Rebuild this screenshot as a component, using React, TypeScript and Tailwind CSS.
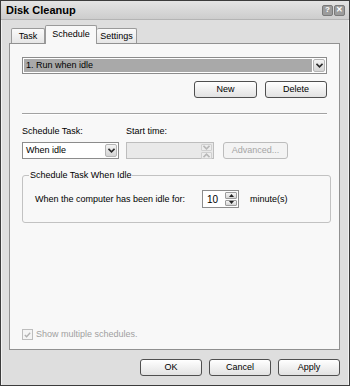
import React from "react";

function Chevron({ color = "#2b2b2b" }: { color?: string }) {
  return (
    <svg width="7" height="5" viewBox="0 0 7 5">
      <path d="M0.5 0.8 L3.5 3.8 L6.5 0.8" fill="none" stroke={color} strokeWidth="1.6" />
    </svg>
  );
}

function Tri({ up, color }: { up?: boolean; color: string }) {
  return (
    <svg width="5" height="3" viewBox="0 0 5 3">
      <path d={up ? "M0 3 L2.5 0 L5 3 Z" : "M0 0 L2.5 3 L5 0 Z"} fill={color} />
    </svg>
  );
}

function Btn({ label, className = "" }: { label: string; className?: string }) {
  return (
    <div
      className={`h-[17px] flex items-center justify-center rounded-[3px] border border-[#4f4f4f] bg-gradient-to-b from-white to-[#e2e2e2] text-black ${className}`}
    >
      {label}
    </div>
  );
}

function ArrowBtn() {
  return (
    <div className="w-[12px] h-full flex items-center justify-center rounded-[2px] border border-[#b5b5b5] bg-gradient-to-b from-[#f4f4f4] to-[#d4d4d4]">
      <Chevron />
    </div>
  );
}

export default function App() {
  return (
    <div className="w-[350px] h-[386px] flex flex-col bg-[#dedede] border border-[#3c3c3c] font-['Liberation_Sans',Arial,sans-serif] text-[9px] leading-[11px] text-black overflow-hidden">
      {/* title bar */}
      <div className="h-[19px] flex items-center justify-between pl-[5px] pr-[4px] bg-gradient-to-b from-[#e4e4e4] to-[#cdcdcd] border-b border-[#b4b4b4]">
        <span className="text-[11px] font-bold leading-[13px]">Disk Cleanup</span>
        <div className="flex gap-[1px]">
          <div className="w-[11px] h-[11px] rounded-[2px] bg-[#9c9c9c] border border-[#7a7a7a] flex items-center justify-center text-white font-bold text-[8px] leading-none">
            ?
          </div>
          <div className="w-[11px] h-[11px] rounded-[2px] bg-[#9c9c9c] border border-[#7a7a7a] flex items-center justify-center text-white font-bold text-[8px] leading-none">
            ✕
          </div>
        </div>
      </div>

      <div className="flex-1 flex flex-col pl-[7px] pr-[8px] border-l border-r border-[#f2f2f2]">
        {/* tabs */}
        <div className="h-[23px] flex items-end pl-[2px] pt-[5px]">
          <div className="w-[34px] h-[15px] flex items-center justify-center border border-b-0 border-[#9a9a9a] rounded-t-[2px] bg-gradient-to-b from-[#fafafa] to-[#e6e6e6]">
            Task
          </div>
          <div className="relative z-10 -mb-px w-[52px] h-[19px] flex items-start pt-[3px] justify-center border border-b-0 border-[#9a9a9a] rounded-t-[2px] bg-[#f8f8f8]">
            Schedule
          </div>
          <div className="w-[40px] h-[15px] flex items-center justify-center border border-b-0 border-l-0 border-[#9a9a9a] rounded-t-[2px] bg-gradient-to-b from-[#fafafa] to-[#e6e6e6]">
            Settings
          </div>
        </div>

        {/* panel */}
        <div className="h-[307px] flex flex-col border border-[#919191] bg-[#f8f8f8] pl-[12px] pr-[12px] pt-[13px] pb-[9px]">
          <div className="h-[17px] flex items-stretch border border-[#8c8c8c] bg-white p-[1px] gap-[1px]">
            <div className="flex-1 flex items-center bg-[#a9a9a9] pl-[2px]">1. Run when idle</div>
            <ArrowBtn />
          </div>

          <div className="mt-[7px] flex justify-end gap-[8px]">
            <Btn label="New" className="w-[63px]" />
            <Btn label="Delete" className="w-[62px]" />
          </div>

          <div className="mt-[15px] h-[2px] border-t border-[#a2a2a2] border-b border-b-white" />

          <div className="mt-[11px] flex">
            <span className="w-[104px]">Schedule Task:</span>
            <span>Start time:</span>
          </div>

          <div className="mt-[5px] h-[17px] flex">
            <div className="w-[97px] flex items-stretch border border-[#8c8c8c] bg-white p-[1px]">
              <div className="flex-1 flex items-center pl-[2px]">When idle</div>
              <ArrowBtn />
            </div>
            <div className="ml-[7px] w-[88px] flex justify-end items-stretch border border-[#bdbdbd] bg-[#e9e9e9] p-[1px]">
              <div className="w-[11px] flex flex-col gap-[1px]">
                <div className="flex-1 flex items-center justify-center border border-[#d0d0d0] rounded-[1px] bg-[#ededed]">
                  <Chevron color="#b8b8b8" />
                </div>
                <div className="flex-1 flex items-center justify-center border border-[#d0d0d0] rounded-[1px] bg-[#ededed] rotate-180">
                  <Chevron color="#b8b8b8" />
                </div>
              </div>
            </div>
            <div className="ml-[9px] w-[65px] flex items-center justify-center rounded-[3px] border border-[#bcbcbc] bg-[#f3f3f3] text-[#a5a5a5]">
              Advanced...
            </div>
          </div>

          {/* group box */}
          <div className="relative mt-[16px] w-[309px] h-[48px] border border-[#c2c2c2] rounded-[3px] pl-[12px] pt-[14px] flex items-start">
            <span className="absolute left-[6px] top-[-6px] px-[1px] bg-[#f8f8f8]">Schedule Task When Idle</span>
            <div className="h-[18px] flex items-center">
              <span className="w-[167px]">When the computer has been idle for:</span>
              <div className="w-[37px] h-[18px] flex items-stretch border border-[#8c8c8c] bg-white p-[1px]">
                <div className="flex-1 flex items-center pl-[3px] text-[10px]">10</div>
                <div className="w-[12px] flex flex-col gap-[1px]">
                  <div className="flex-1 flex items-center justify-center border border-[#9c9c9c] rounded-[1px] bg-gradient-to-b from-[#f6f6f6] to-[#d6d6d6]">
                    <Tri up color="#222" />
                  </div>
                  <div className="flex-1 flex items-center justify-center border border-[#9c9c9c] rounded-[1px] bg-gradient-to-b from-[#f6f6f6] to-[#d6d6d6]">
                    <Tri color="#222" />
                  </div>
                </div>
              </div>
              <span className="ml-[11px]">minute(s)</span>
            </div>
          </div>

          <div className="mt-auto flex items-center gap-[3px] text-[#a0a0a0]">
            <div className="w-[11px] h-[11px] border border-[#bdbdbd] bg-[#f4f4f4] flex items-center justify-center">
              <svg width="7" height="6" viewBox="0 0 7 6">
                <path d="M0.8 3 L2.6 4.8 L6.2 0.8" fill="none" stroke="#b0b0b0" strokeWidth="1.3" />
              </svg>
            </div>
            <span>Show multiple schedules.</span>
          </div>
        </div>

        {/* dialog buttons */}
        <div className="mt-[9px] flex justify-end gap-[7px]">
          <Btn label="OK" className="w-[62px]" />
          <Btn label="Cancel" className="w-[62px]" />
          <Btn label="Apply" className="w-[62px]" />
        </div>
      </div>
    </div>
  );
}
